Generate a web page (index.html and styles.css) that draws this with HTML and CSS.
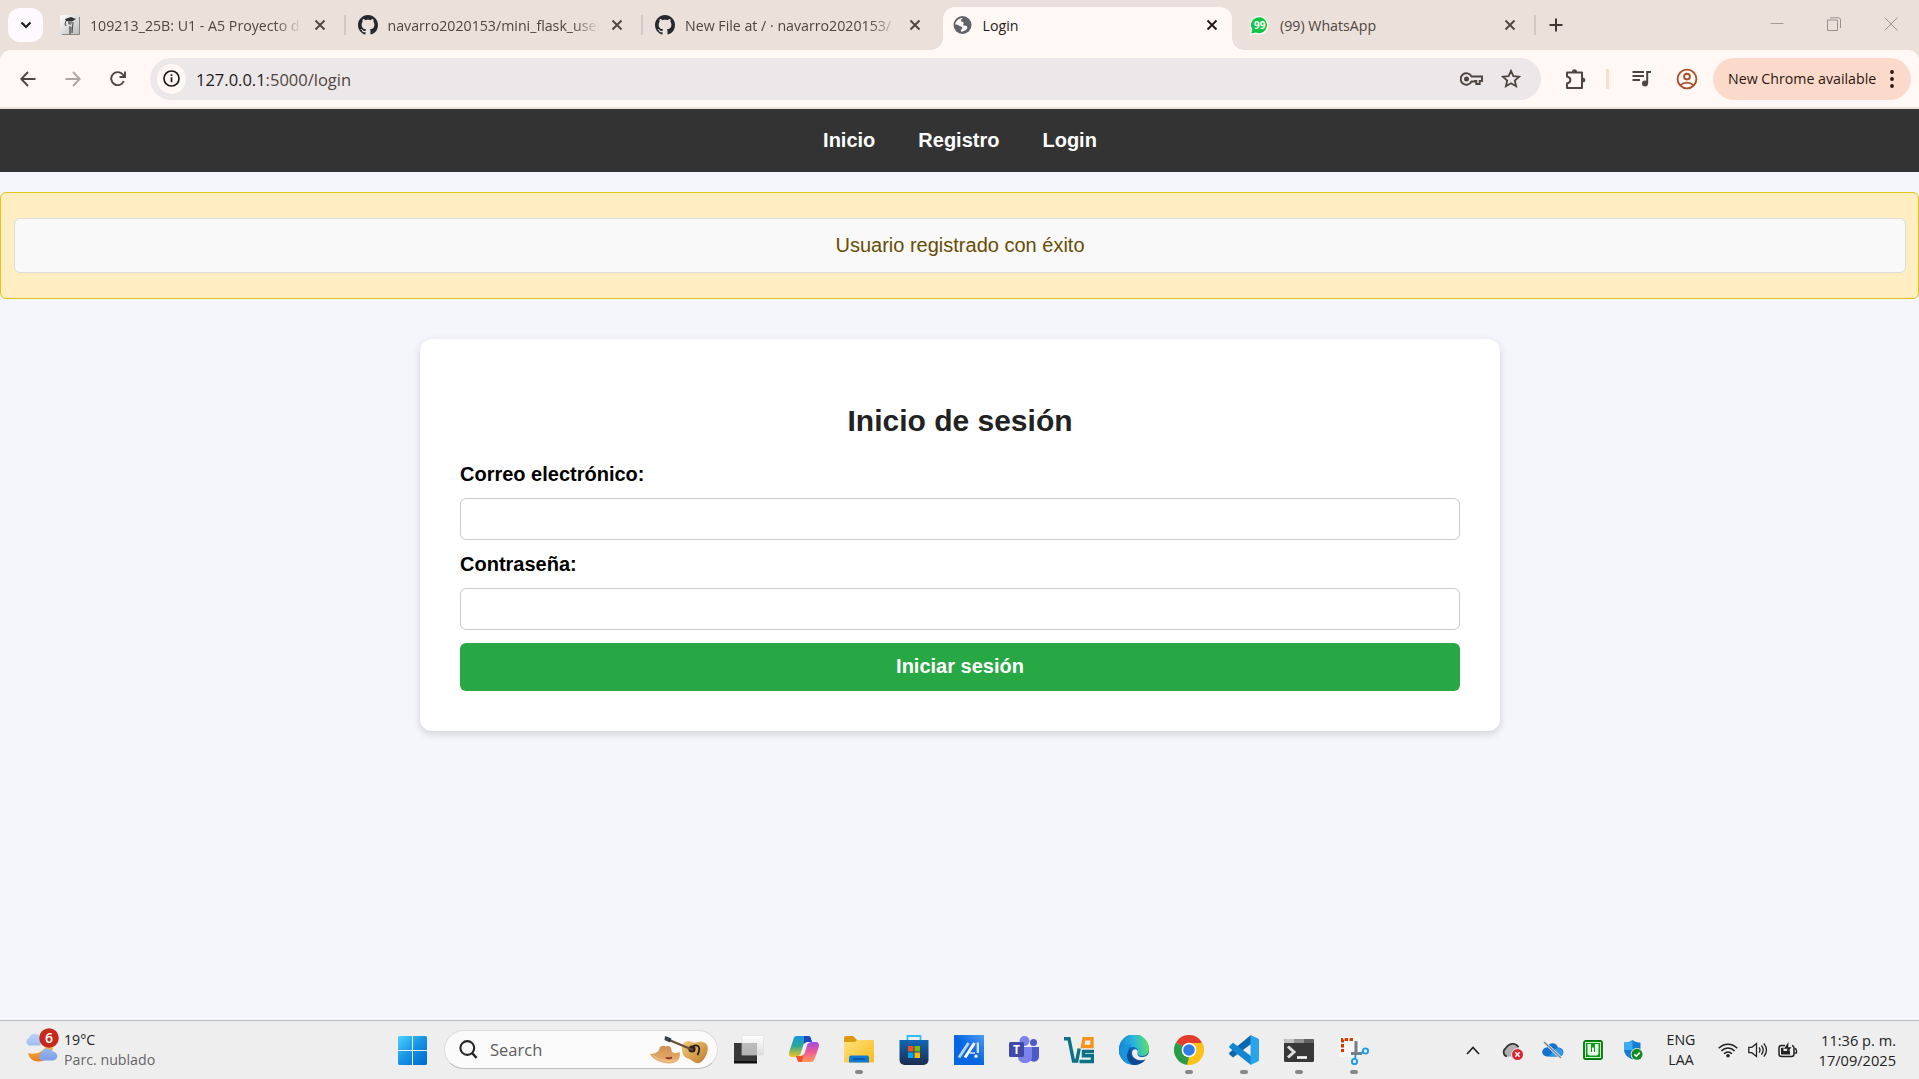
FILE: index.html
```html
<!DOCTYPE html>
<html lang="es">
<head>
<meta charset="utf-8">
<title>Login</title>
<link rel="stylesheet" href="styles.css">
</head>
<body>
<svg class="defs" width="0" height="0" aria-hidden="true">
  <defs>
    <symbol id="x" viewBox="0 0 12 12"><path d="M1.500 1.500l9 9M10.500 1.500l-9 9" fill="none" stroke="currentColor" stroke-width="1.900"/></symbol>
    <symbol id="github" viewBox="0 0 16 16"><path fill="#24292f" d="M8 0C3.580 0 0 3.580 0 8c0 3.540 2.290 6.530 5.470 7.590.4.070.550-.170.550-.380 0-.190-.010-.820-.010-1.490-2.010.370-2.530-.490-2.690-.940-.090-.230-.480-.940-.820-1.130-.280-.150-.680-.520-.010-.530.630-.010 1.080.580 1.230.820.720 1.210 1.870.870 2.330.660.070-.520.280-.870.510-1.070-1.780-.200-3.640-.890-3.640-3.950 0-.870.310-1.590.820-2.150-.080-.200-.360-1.020.080-2.120 0 0 .670-.210 2.200.820.640-.180 1.320-.270 2-.270s1.360.090 2 .270c1.530-1.040 2.200-.820 2.200-.820.440 1.100.160 1.920.080 2.120.510.560.820 1.270.820 2.150 0 3.070-1.870 3.750-3.650 3.950.290.250.540.730.540 1.480 0 1.070-.010 1.930-.010 2.200 0 .210.150.460.550.380A8.010 8.010 0 0 0 16 8c0-4.420-3.580-8-8-8z"/></symbol>
    <linearGradient id="gwin" x1="0" y1="0" x2="1" y2="1"><stop offset="0" stop-color="#4bd3ff"/><stop offset=".5" stop-color="#1691e4"/><stop offset="1" stop-color="#0068cc"/></linearGradient>
    <linearGradient id="gcloud" x1="0" y1="0" x2="0" y2="1"><stop offset="0" stop-color="#b9d4fb"/><stop offset="1" stop-color="#7d9fe6"/></linearGradient>
    <linearGradient id="gmoon" x1="0" y1="0" x2="0" y2="1"><stop offset="0" stop-color="#f5b62c"/><stop offset="1" stop-color="#ee7a24"/></linearGradient>
    <linearGradient id="ghat" x1="0" y1="0" x2="0" y2="1"><stop offset="0" stop-color="#d08f50"/><stop offset="1" stop-color="#eab273"/></linearGradient>
    <linearGradient id="ggtr" x1="0" y1="0" x2="1" y2="1"><stop offset="0" stop-color="#f3cc7c"/><stop offset="1" stop-color="#bd7a2c"/></linearGradient>
    <linearGradient id="gtv" x1="0" y1="0" x2="0" y2="1"><stop offset="0" stop-color="#fff"/><stop offset="1" stop-color="#dcdcdc"/></linearGradient>
    <linearGradient id="gcopl" x1="0" y1="0" x2="0" y2="1"><stop offset="0" stop-color="#1894e8"/><stop offset=".45" stop-color="#27a79a"/><stop offset="1" stop-color="#f4c51d"/></linearGradient>
    <linearGradient id="gcopr" x1="0" y1="0" x2="0" y2="1"><stop offset="0" stop-color="#a04be8"/><stop offset=".5" stop-color="#ee5b93"/><stop offset="1" stop-color="#ff9a5c"/></linearGradient>
    <linearGradient id="gfold" x1="0" y1="0" x2="1" y2="1"><stop offset="0" stop-color="#ffe27d"/><stop offset="1" stop-color="#fdbb1d"/></linearGradient>
    <linearGradient id="gstore" x1="0" y1="0" x2="0" y2="1"><stop offset="0" stop-color="#1067b4"/><stop offset="1" stop-color="#1c2c4e"/></linearGradient>
    <linearGradient id="gasus" x1="0" y1="1" x2="1" y2="0"><stop offset=".5" stop-color="#0866e0"/><stop offset="1" stop-color="#4d9cf8"/></linearGradient>
    <linearGradient id="gedge" x1="0" y1=".4" x2="1" y2=".3"><stop offset="0" stop-color="#1384d8"/><stop offset=".5" stop-color="#2ab7dc"/><stop offset="1" stop-color="#5fe25b"/></linearGradient>
  </defs>
</svg>

<header class="browser">
  <div class="tabstrip">
    <button class="tab-search"><svg width="12" height="8" viewBox="0 0 12 8"><path d="M1.500 1.500L6 6l4.500-4.500" fill="none" stroke="#1f1b1a" stroke-width="2.200"/></svg></button>
    <div class="tab">
      <svg class="fav" viewBox="0 0 20 20"><defs><linearGradient id="gm" x1="0" y1="0" x2="1" y2="1"><stop offset="0" stop-color="#fff"/><stop offset="1" stop-color="#b9b9b9"/></linearGradient></defs><rect width="20" height="20" rx="1.500" fill="url(#gm)"/><path d="M19.500 2v17.500H2" fill="none" stroke="#888"/><path d="M5 4l6-2 5 2-4 2.500-6-.5z" fill="#333"/><path d="M8 6l4 1-1 3-3-1zM9 11l3 1-1 7H9z" fill="#777"/><path d="M6 6L5 9l1 2M13 7l-1 11" stroke="#444" fill="none"/></svg>
      <span class="title fade">109213_25B: U1 - A5 Proyecto d</span>
      <svg class="close"><use href="#x"/></svg>
    </div>
    <div class="tab sep">
      <svg class="fav"><use href="#github"/></svg>
      <span class="title fade">navarro2020153/mini_flask_user</span>
      <svg class="close"><use href="#x"/></svg>
    </div>
    <div class="tab sep">
      <svg class="fav"><use href="#github"/></svg>
      <span class="title fade">New File at / · navarro2020153/</span>
      <svg class="close"><use href="#x"/></svg>
    </div>
    <div class="tab active">
      <svg class="fav" viewBox="0 0 20 20"><circle cx="9.500" cy="10" r="9" fill="#5f6368"/><path d="M2 9.500C3 5.500 6 3 10 3c-1.500 1-2.500 2-2 3 .6 1 2 .5 2.500 1.500s-.8 2-.2 2.800c.8.800 2.600 0 3.600 1 1.200 1.200-.2 3.200-1.500 4-1 .7-2.400.7-3.400 1.700-1.200-.3-1.500-1.500-.8-2.400.6-.8 1.400-1.200 1-2.200-.5-1.200-2-.8-3-1.600C5.200 10 4 9.300 2 9.500z" fill="#fff8f5"/></svg>
      <span class="title">Login</span>
      <svg class="close"><use href="#x"/></svg>
    </div>
    <div class="tab end">
      <svg class="fav" viewBox="0 0 20 20"><path d="M0 20l1.200-5A9.300 9.300 0 1 1 6 19z" fill="#fff"/><path d="M1.300 18.600l1-4A8 8 0 1 1 6 17.600z" fill="#11c443"/><text x="9.700" y="13.800" text-anchor="middle" class="wa">99</text></svg>
      <span class="title">(99) WhatsApp</span>
      <svg class="close"><use href="#x"/></svg>
    </div>
    <svg class="plus" width="14" height="14" viewBox="0 0 14 14"><path d="M7 .5v13M.5 7h13" stroke="#3f3632" stroke-width="2"/></svg>
    <div class="winbtns">
      <svg width="14" height="14" viewBox="0 0 14 14"><path d="M.5 6.500h13" stroke="#a69c97"/></svg>
      <svg width="14" height="14" viewBox="0 0 14 14"><path d="M.5 3h10v10.500H.5zM3 .8h8.500a2 2 0 0 1 2 2V11" fill="none" stroke="#9b918c"/></svg>
      <svg width="14" height="14" viewBox="0 0 14 14"><path d="M.5.5l13 13M13.500.5l-13 13" stroke="#9b918c"/></svg>
    </div>
  </div>
  <div class="toolbar">
    <div class="navbtns">
      <svg width="16" height="16" viewBox="0 0 16 16"><path d="M15.500 8H1.500M8 1L1.300 8 8 15" fill="none" stroke="#4e4540" stroke-width="1.900"/></svg>
      <svg width="16" height="16" viewBox="0 0 16 16"><path d="M.5 8h14M8 1l6.700 7L8 15" fill="none" stroke="#aea6a2" stroke-width="1.900"/></svg>
      <svg width="16" height="16" viewBox="0 0 16 16"><path d="M13.800 10A6.500 6.500 0 1 1 13 3.800L15 6M15 .5V6H9.500" fill="none" stroke="#4e4540" stroke-width="1.900"/></svg>
    </div>
    <div class="omnibox">
      <span class="info"><svg width="17" height="17" viewBox="0 0 17 17"><circle cx="8.500" cy="8.500" r="7.500" fill="none" stroke="#1f1b1a" stroke-width="1.700"/><path d="M8.500 7.300v5M8.500 4.200v1.800" stroke="#1f1b1a" stroke-width="1.700"/></svg></span>
      <span class="url"><b>127.0.0.1</b>:5000/login</span>
      <svg class="key" width="23" height="16" viewBox="0 0 23 16"><path d="M11.500 5.500a5.700 5.700 0 1 0 0 5H15V10h1.300v3h3.400v-3H22V5.500z" fill="none" stroke="#4e4540" stroke-width="1.900"/><circle cx="6.500" cy="8" r="2.500" fill="#4e4540"/></svg>
      <svg width="20" height="19" viewBox="0 0 20 19"><path d="M10 1.800l2.400 5.300 5.700.6-4.300 3.800 1.300 5.700L10 14.300l-5.100 2.900 1.300-5.700L1.900 7.700l5.700-.6z" fill="none" stroke="#4e4540" stroke-width="1.800"/></svg>
    </div>
    <svg class="ext" width="22" height="22" viewBox="0 0 22 22"><path d="M2 4.500h15v15.500H2v-4.500c4.500-1 4.500-6 0-7z" fill="none" stroke="#4e4540" stroke-width="2" stroke-linejoin="round"/><path d="M7 4a2.500 2.800 0 0 1 5 0zM17.500 9.500a2.800 2.500 0 0 1 0 5z" fill="#4e4540"/></svg>
    <i class="divider"></i>
    <svg class="media" width="20" height="18" viewBox="0 0 20 18"><path d="M.5 2h11.500M.5 6h11.500M.5 10h7.500M15.200 13.500V2H19" fill="none" stroke="#4e4540" stroke-width="2"/><circle cx="13" cy="13.500" r="3" fill="#4e4540"/></svg>
    <svg class="profile" width="22" height="22" viewBox="0 0 22 22"><g fill="none" stroke="#a8502b" stroke-width="1.900"><circle cx="11" cy="11" r="9.400"/><circle cx="11" cy="8.600" r="2.900"/><path d="M4.500 17.300c3.500-3.600 9.500-3.600 13 0"/></g></svg>
    <button class="update"><span>New Chrome available</span><svg width="4" height="18" viewBox="0 0 4 18"><g fill="#2b1710"><circle cx="2" cy="2" r="1.900"/><circle cx="2" cy="9" r="1.900"/><circle cx="2" cy="16" r="1.900"/></g></svg></button>
  </div>
</header>

<main class="page">
  <nav class="site-nav"><a>Inicio</a><a>Registro</a><a>Login</a></nav>
  <div class="flashes"><p class="flash">Usuario registrado con éxito</p></div>
  <form class="card">
    <h2>Inicio de sesión</h2>
    <label for="email">Correo electrónico:</label>
    <input id="email" type="email">
    <label for="pass">Contraseña:</label>
    <input id="pass" type="password">
    <button type="button">Iniciar sesión</button>
  </form>
</main>

<footer class="taskbar">
  <div class="weather">
    <svg width="35" height="35" viewBox="0 0 35 35"><path d="M21 19c2.500 0 5 0 7 .5-1 9-7 14-14.500 14C8 33.500 4 30 3 25c7 2 14-.5 18-6z" fill="url(#gmoon)"/><path d="M4 17.500a4 4 0 0 1 0-7.500 6.500 6.500 0 0 1 11.500-1.500V17.500zM17 32.500a3.900 3.900 0 0 1-.5-7.500 6 6 0 0 1 11-1.500A4.500 4.500 0 0 1 28 32.500z" fill="url(#gcloud)"/><circle cx="24" cy="10" r="9.800" fill="#c42b1c"/><text x="24" y="15.300" class="badge" text-anchor="middle">6</text></svg>
    <div class="wtext"><span>19°C</span><span class="dim">Parc. nublado</span></div>
  </div>
  <div class="dock">
    <svg class="start" width="29" height="29" viewBox="0 0 29 29"><path d="M1 0h13v14H0V1zM15 0h13l1 1v13H15zM0 15h14v14H1l-1-1zM15 15h14v13l-1 1H15z" fill="url(#gwin)"/></svg>
    <div class="search">
      <svg width="19" height="19" viewBox="0 0 19 19"><circle cx="8.300" cy="8" r="6.900" fill="none" stroke="#262626" stroke-width="2.100"/><path d="M13 13l4.600 4.800" stroke="#262626" stroke-width="2.500"/></svg>
      <span>Search</span>
      <svg class="art" width="60" height="30" viewBox="0 0 60 30"><path d="M32 13c0-4 3-7 6-7 3 0 4 2 7 1.500 4-1 8-1.500 11 1 3 3 2 9-1 14-3 5-7 7-10 5-3-1.500-4-3-7-4-5-1.500-6-6-6-10.500z" fill="url(#ggtr)"/><circle cx="42" cy="14" r="3.600" fill="#2b211b"/><path d="M18 4.500l25 10.500" stroke="#6b4c39" stroke-width="2.200"/><path d="M43 11c6-2 8 2 4.500 9" stroke="#241d1a" stroke-width="1.800" fill="none"/><path d="M15 1l6.500 2.500-1.500 4-5.500-2.500z" fill="#34434b"/><path d="M0 19c4 0 6-1 8.500-3L10 12c2-1.500 4-1.500 6-.5 2-1 4-.5 5 1.500l1 4c2 1.500 5 1.500 7.500 0 1.500 5-1 11-9 11.500C13 29 3 25 0 19z" fill="url(#ghat)"/><path d="M15.500 22c3 .6 5 .4 6.500-.5v2c-2 1-4 1-6 .3z" fill="#8a3524"/><path d="M3 20c5 5 14 8 24 5" stroke="#f4cd98" fill="none"/></svg>
    </div>
    <div class="apps">
      <span class="app"><svg viewBox="0 0 30 30"><path d="M0 8h23v20H0z" fill="#383838"/><path d="M0 26h23v2.500H0z" fill="#111"/><rect x="8" y=".5" width="21.500" height="19.500" fill="url(#gtv)" stroke="#ddd" stroke-width=".6"/><path d="M8 8h15v12H8z" fill="#999" fill-opacity=".6"/></svg></span>
      <span class="app"><svg viewBox="0 0 30 30"><path d="M8 1h11c2 0 2.500 1 3 3l1 3h-4c-3 0-4 1-5 4l-2.500 8C10.500 21 9 22 7 22H3c-3 0-3.500-3-2.500-6l4-12C5 2 6 1 8 1z" fill="url(#gcopl)"/><path d="M15 1h4c2 0 2.500 1 3 3l1 3h-4c-2 0-3 .5-4 2z" fill="#1d48bd"/><path d="M22 27H11c-2 0-2.500-1-3-3l-1-3h4c3 0 4-1 5-4l2.500-8C19.500 8 21 7 23 7h4c3 0 3.500 3 2.500 6l-4 11c-.5 2-1.500 3-3.500 3z" fill="url(#gcopr)"/><path d="M7 21h4c2 0 3-.5 4-2l-2 8h-2c-2 0-2.500-1-3-3z" fill="#ee5633"/></svg></span>
      <span class="app run"><svg viewBox="0 0 30 30"><path d="M0 3q0-2 2-2h7l4 4h15q2 0 2 2v7H0z" fill="#dc9a0c"/><path d="M0 7h11l2-2h15.500L30 6.500V26q0 1.500-1.500 1.500h-27Q0 27.500 0 26z" fill="url(#gfold)"/><path d="M5 27.500v-5q0-2 2-2h16q2 0 2 2v5z" fill="#0f7ad5"/><path d="M9 24h12" stroke="#064a92" stroke-width="1.300"/></svg></span>
      <span class="app"><svg viewBox="0 0 30 30"><path d="M8.500 6V1h13v5" fill="none" stroke="#31bdf2" stroke-width="1.800"/><path d="M.5 5h29v20a5 5 0 0 1-5 5h-19a5 5 0 0 1-5-5z" fill="url(#gstore)"/><path d="M9 11h5.500v5.500H9z" fill="#f25022"/><path d="M15.500 11H21v5.500h-5.500z" fill="#7fba00"/><path d="M9 17.500h5.500V23H9z" fill="#00a4ef"/><path d="M15.500 17.500H21V23h-5.500z" fill="#ffb900"/></svg></span>
      <span class="app"><svg viewBox="0 0 30 30"><path d="M0 0h30v30H0z" fill="url(#gasus)"/><path d="M11 22.500L20.500 8" stroke="#fff" stroke-width="3"/><path d="M5 22.500L14.500 8" stroke="#b4d3fa" stroke-width="3"/><path d="M22.700 7.500H25V18h-2.300z" fill="#d4e5fc"/><path d="M16 18h5" stroke="#b4d3fa" stroke-width="1.800"/><circle cx="22" cy="21.300" r="1.700" fill="#fff"/></svg></span>
      <span class="app"><svg viewBox="0 0 30 30"><circle cx="24.500" cy="7.500" r="3.500" fill="#5059c9"/><path d="M19 12h11v9c0 7-8 7-9 3z" fill="#5059c9"/><circle cx="15.500" cy="6" r="5" fill="#7b83eb"/><path d="M9 12h14v10c0 8-14 8-14 0z" fill="#7b83eb"/><rect y="7" width="15" height="15" rx="1.500" fill="#4048a8"/><text x="7.500" y="19" class="teams" text-anchor="middle">T</text></svg></span>
      <span class="app"><svg viewBox="0 0 30 30" fill="none" stroke-width="3.400"><path d="M0 3.700h5L9.500 26h3.200l2.500-12.500M30 16.500H19.500v4.300H28.500V26.500H15.500" stroke="#0b7285"/><path d="M18.500 11.500L20 3.700h8v7.800z" stroke="#f7941d"/></svg></span>
      <span class="app"><svg viewBox="0 0 30 30"><circle cx="15" cy="15" r="15" fill="#1068b8"/><path d="M0 14A15 15 0 0 1 30 14c0 4-3 7-7 7-3 0-5-1-4.500-3 1.500-3-1-6-5-6C7 12 3 15 0 20z" fill="url(#gedge)"/><path d="M0 15c3-5 8-7 13-5-5 2-6 13 1 19.500C5 30 0 22 0 15z" fill="#1795dc"/><path d="M12 14c-2 8 6 14 15 9.500C24 28 19 31 13 29.500 6 25 7 16 12 14z" fill="#0c4a93"/><path d="M18.500 18c-.5 3 2 4.500 6 4 2.500-.4 3.500-1.300 5-3.500l1 1.500-3.500 4.500c-7 2.500-14-1-14-6.500 0-3 3-5 5-3 1 1 .8 2 .5 3z" fill="#eee"/></svg></span>
      <span class="app run"><svg viewBox="0 0 30 30"><path d="M15 15L2 7.500A15 15 0 0 1 28 7.500z" fill="#e33b2e"/><path d="M15 15L28 7.500A15 15 0 0 1 15 30z" fill="#fbc116"/><path d="M15 15v15A15 15 0 0 1 2 7.500z" fill="#2a9b48"/><path d="M15 8h13.300L21 19l-6 11 4-10z" fill="#fbc116"/><path d="M15 22l6-3-6 11-2-.1z" fill="#fbc116"/><circle cx="15" cy="15" r="7.300" fill="#fff"/><circle cx="15" cy="15" r="5.800" fill="#2f7de9"/></svg></span>
      <span class="app run"><svg viewBox="0 0 30 30"><path d="M22 0v9L4 22.500l-3.500-3q-.8-1 0-2z" fill="#0a69ae"/><path d="M.5 11L4 7.800 22 21v9L.5 12.800q-.8-.9 0-1.800z" fill="#1286d0"/><path d="M21.500 0l7 3.200Q30 4 30 5v20q0 1-1.500 1.800L21.500 30z" fill="#29a3ec"/></svg></span>
      <span class="app run"><svg viewBox="0 0 30 30"><rect y="4" width="30" height="23" rx="1.500" fill="#383838"/><path d="M0 8V5.500Q0 4 1.500 4H10v4z" fill="#c4c4c4"/><path d="M10 4h10v4H10z" fill="#919191"/><path d="M20 4h8.500Q30 4 30 5.500V8H20z" fill="#616161"/><path d="M4 11.500l6 5.500-6 5.500" fill="none" stroke="#ddd" stroke-width="3"/><path d="M13 22.500h10" stroke="#fff" stroke-width="2.600"/></svg></span>
      <span class="app run"><svg viewBox="0 0 30 30"><rect x="0" y="2" width="21" height="20" fill="#f6f6f6"/><path d="M14 4.500H3.500V17" fill="none" stroke="#d83b01" stroke-width="3" stroke-dasharray="3.400 1.600"/><path d="M17 6v12.500M12 18.500h11" fill="none" stroke="#777e86" stroke-width="3"/><g fill="none" stroke="#1e9de3" stroke-width="1.900"><path d="M22 18l3-1M16.500 20l-.5 4"/><circle cx="26.500" cy="16" r="2.600"/><circle cx="15.500" cy="26.500" r="2.600"/></g></svg></span>
    </div>
  </div>
  <div class="tray">
    <svg class="up" width="14" height="9" viewBox="0 0 14 9"><path d="M1 8l6-6.500L13 8" fill="none" stroke="#222" stroke-width="1.700"/></svg>
    <svg class="ti" viewBox="0 0 22 20"><path d="M5 16.500a4.500 4.500 0 0 1-1-8.500C6 3 13 1.500 16 6l2 4v6.500z" fill="#b0b0b0"/><path d="M5 16.500a4.500 4.500 0 0 1-1.500-8C7 3 13 2 16.500 7" fill="none" stroke="#333" stroke-width="1.700"/><circle cx="15.500" cy="14.500" r="6.300" fill="#eee"/><circle cx="15.500" cy="14.500" r="5.500" fill="#d9262e"/><path d="M13.300 12.300l4.400 4.400M17.700 12.300l-4.400 4.400" stroke="#fff" stroke-width="1.500"/></svg>
    <svg class="ti" viewBox="0 0 22 20"><path d="M5 16.500a4.500 4.500 0 0 1-.5-9C7 2.500 14 1.500 16 7.500c7 0 7 9 1 9z" fill="#1373cf"/><path d="M7 16.500l6-7.500c8-3.500 11 7.500 4 7.500z" fill="#2f9ae8"/><path d="M2 2l17 16" stroke="#eee" stroke-width="3"/><path d="M2 2l17 16" stroke="#7d8389" stroke-width="1.500"/></svg>
    <svg class="ti" viewBox="0 0 22 20"><rect x="1.800" y=".8" width="18.400" height="18.400" rx="2" fill="#0a9c14" stroke="#05730c" stroke-width="1.400"/><rect x="3.500" y="2.500" width="15" height="15" fill="none" stroke="#c9f0cb" stroke-width="1"/><path d="M5.500 4H9v8h1V7.500h2V12h1V4h3.500v10l-1.500 1.500H7L5.500 14z" fill="#e9f7ea"/></svg>
    <svg class="ti" viewBox="0 0 22 20"><path d="M10.500 0c2.500 2 5 2.500 8 2.500V9c0 5-3 8-8 10.500C5 17 2 14 2 9V2.500c3.500 0 6-.5 8.500-2.500z" fill="#147bd1"/><path d="M10.500 0v10H2V2.500c3.500 0 6-.5 8.500-2.500z" fill="#39adf0"/><circle cx="15" cy="14.300" r="6.300" fill="#eee"/><circle cx="15" cy="14.300" r="5.500" fill="#0f8a1c"/><path d="M12.300 14.300l2 2 3.500-3.800" stroke="#fff" stroke-width="1.600" fill="none"/></svg>
    <div class="lang"><span>ENG</span><span>LAA</span></div>
    <div class="sys">
      <svg width="20" height="15" viewBox="0 0 20 15"><g fill="none" stroke="#222" stroke-width="1.500"><path d="M.7 5.300c5.200-5.400 13.400-5.400 18.600 0M3.300 8c3.800-3.900 9.600-3.900 13.400 0M6 10.800c2.300-2.400 5.700-2.400 8 0"/></g><circle cx="10" cy="12.800" r="1.800" fill="#222"/></svg>
      <svg width="20" height="16" viewBox="0 0 20 16"><g fill="none" stroke="#222" stroke-width="1.300"><path d="M.8 5.300h3L8.500 1.500v13L3.800 10.700h-3z"/><path d="M11 5.300q2 2.700 0 5.400M13.400 3.300q3.600 4.700 0 9.400M15.800 1.300q5.300 6.700 0 13.400"/></g></svg>
      <svg width="20" height="16" viewBox="0 0 20 16"><path d="M7 3.500H3.500q-2.500 0-2.500 2.500v6q0 2.500 2.500 2.500h10q2.500 0 2.500-2.500V6q0-2-2-2.500" fill="none" stroke="#222" stroke-width="1.500"/><path d="M16.500 6.500q2.500.3 2 4.500h-2" fill="none" stroke="#222" stroke-width="1.300"/><path d="M3 6l2.500-.5V9H11l1-1v4.500H3z" fill="#222"/><path d="M10.500 0L6 6.700h3.500L8 12l5.500-6.800h-3.300z" fill="#222"/></svg>
    </div>
    <div class="clock"><span>11:36 p. m.</span><span>17/09/2025</span></div>
  </div>
</footer>
</body>
</html>
```
FILE: styles.css
```css
* { box-sizing: border-box; }
body {
  margin: 0;
  height: 1079px;
  display: flex;
  flex-direction: column;
  overflow: hidden;
  background: #f4f6fb;
  font-family: "Liberation Sans", Arial, sans-serif;
}
svg { display: block; flex: none; }
.defs { position: absolute; }
button { border: 0; padding: 0; font: inherit; }

/* browser chrome */
.browser, .taskbar { font-family: "Open Sans", "Noto Sans", sans-serif; }
.browser { flex: none; height: 109px; background: #ebe0da; }
.tabstrip { position: relative; z-index: 0; display: flex; align-items: center; height: 50px; padding-left: 8px; }
.tab-search {
  display: flex; align-items: center; justify-content: center;
  width: 35px; height: 34px; margin-right: 6px;
  border-radius: 12px; background: #fffaff;
}
.tab {
  display: flex; align-items: center; flex: none;
  position: relative;
  width: 297.5px; height: 50px; padding: 0 21px 0 11px;
  color: #51463f; font-size: 14.200px;
}
.fav { width: 20px; height: 20px; margin-right: 10px; }
.title { width: 216px; padding-top: 1px; white-space: nowrap; line-height: 24px; }
.fade { -webkit-mask-image: linear-gradient(90deg, #000 185px, transparent 212px); mask-image: linear-gradient(90deg, #000 185px, transparent 212px); }
.close { width: 12px; height: 12px; margin-left: auto; }
.sep::before, .end::after {
  content: ""; position: absolute; left: -3px; top: 15px;
  width: 2px; height: 20px; background: #d4c8c3;
}
.end::after { left: auto; right: 1px; }
.active { color: #1f1b1a; }
.active::before {
  content: ""; position: absolute; z-index: -1; left: 1px; right: 7px; top: 7px; bottom: 0;
  border-radius: 12px 12px 0 0; background: #fff8f5;
}
.active::after {
  content: ""; position: absolute; z-index: -1; left: -11px; right: -5px; bottom: 0; height: 12px;
  background:
    radial-gradient(circle at 0 0, transparent 11.500px, #fff8f5 12px) left / 12px 12px no-repeat,
    radial-gradient(circle at 100% 0, transparent 11.500px, #fff8f5 12px) right / 12px 12px no-repeat;
}
.wa { font: bold 10px "Open Sans", sans-serif; fill: #fff; }
.plus { margin-left: 12px; }
.winbtns { display: flex; gap: 43px; margin-left: auto; padding: 0 21px 2px 0; }

.toolbar {
  display: flex; align-items: center;
  height: 57px; padding: 0 8px 0 20px;
  border-radius: 11px 11px 0 0; background: #fff8f5;
}
.navbtns { display: flex; gap: 29px; width: 130px; }
.omnibox {
  display: flex; align-items: center;
  width: 1391px; height: 42px; padding: 0 20px 0 7px;
  border-radius: 21px; background: #ece7e8;
}
.info {
  display: flex; align-items: center; justify-content: center;
  width: 29px; height: 30px; margin-right: 10px; border-radius: 50%; background: #fff8f5;
}
.url { flex: 1; padding-top: 1px; font-size: 16.500px; color: #51463f; }
.url b { font-weight: 400; color: #1f1b1a; }
.key { margin-right: 18px; }
.ext { margin-left: 24px; }
.divider { width: 3px; height: 20px; margin: 0 23px 0 19px; background: #fbdccd; }
.profile { margin-left: 24px; }
.update {
  display: flex; align-items: center; justify-content: space-between;
  width: 198px; height: 42px; margin-left: auto; padding: 0 17px 0 15px;
  border-radius: 21px; background: #fbdacb; color: #2b1710; font-size: 14.200px;
}

/* page */
.page { flex: 1; font-size: 20px; }
.site-nav {
  display: flex; justify-content: center; align-items: center; gap: 43px;
  height: 63px; padding-left: 1px; background: #333; color: #fff; font-weight: 700;
}
.flashes {
  height: 107px; margin: 20px 0 40px; padding: 25px 12px 25px 13px;
  border: 1px solid #e6c317; border-radius: 6px; background: #ffeec2;
}
.flash {
  margin: 0; height: 55px; line-height: 53px; text-align: center;
  border: 1px solid #ddd; border-radius: 6px; background: #f9f9f9; color: #664d03;
}
.card {
  display: flex; flex-direction: column;
  height: 392px; margin: 0 419px 0 420px; padding: 40px;
  border-radius: 12px; background: #fff; box-shadow: 0 3px 8px rgba(0, 0, 0, .15);
}
.card h2 { margin: 24px 0 25px; font-size: 30px; line-height: 35px; text-align: center; color: #222; }
.card label { height: 23px; margin-bottom: 12px; line-height: 23px; font-weight: 700; color: #000; }
.card input { height: 42px; margin: 0 0 13px; border: 1px solid #ccc; border-radius: 6px; background: #fff; }
.card button { height: 48px; padding-bottom: 2px; border-radius: 6px; background: #28a745; color: #fff; font-weight: 700; }

/* taskbar */
.taskbar {
  display: grid; grid-template-columns: 398px 1fr auto;
  flex: none; height: 59px; border-top: 1px solid #bababe;
  background: #eee; color: #222; font-size: 14.200px; line-height: 20px;
}
.weather { display: flex; gap: 4px; padding: 7px 0 0 25px; }
.wtext { display: flex; flex-direction: column; padding-top: 2px; }
.dim { color: #666; }
.badge { font: 600 14px "Open Sans", sans-serif; fill: #fff; }
.dock { display: flex; padding-top: 9px; }
.start { margin: 6px 17px 0 0; }
.search {
  display: flex; align-items: center;
  width: 274px; height: 39px; padding: 0 7px 0 14px;
  border: 1px solid #dcdcdc; border-bottom-color: #bbb; border-radius: 20px;
  background: #fafafa; color: #5d5d5d; font-size: 16.500px;
}
.search span { margin-left: 12px; }
.art { margin-left: auto; }
.apps { display: flex; gap: 25px; margin-left: 15.500px; }
.app { position: relative; width: 30px; height: 48px; padding-top: 5px; }
.app svg { width: 30px; height: 30px; }
.run::after {
  content: ""; position: absolute; left: 11px; bottom: 4px;
  width: 8px; height: 4px; border-radius: 2px; background: #888;
}
.teams { font: bold 12px "Open Sans", sans-serif; fill: #fff; }
.tray { display: flex; align-items: center; padding-right: 23px; }
.up { margin-right: 22px; }
.ti { width: 22px; height: 20px; margin-right: 18px; }
.lang, .clock { display: flex; flex-direction: column; padding-bottom: 1px; }
.lang { align-items: center; margin-left: 3px; width: 32px; }
.sys { display: flex; align-items: center; gap: 10px; margin-left: 21px; }
.clock { align-items: flex-end; width: 98px; font-size: 14.600px; }
```
